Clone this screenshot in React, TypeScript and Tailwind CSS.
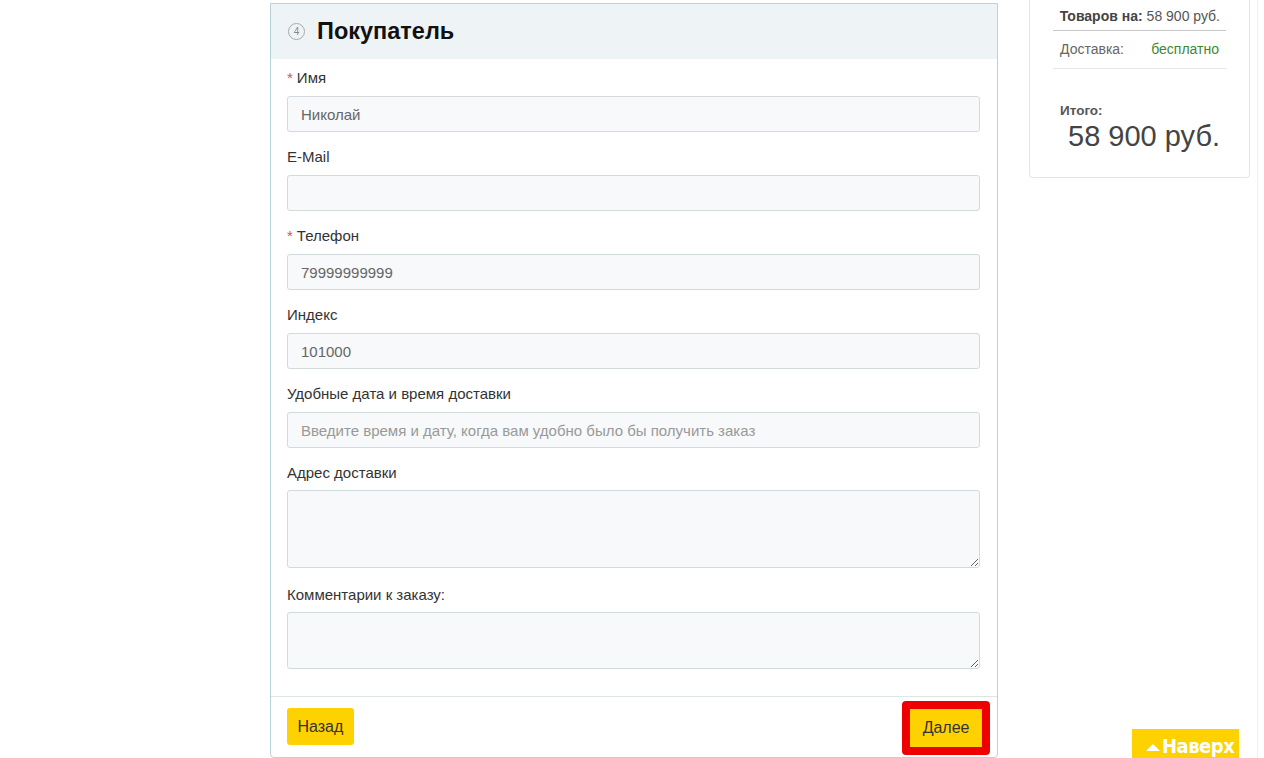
import React from "react";

const fieldCls =
  "block w-full h-[36px] rounded-[3px] border border-[#d3dadd] bg-[#f7f9fa] px-[13px] text-[15px] text-[#666] placeholder:text-[#999] outline-none";

const Label = ({ text, required }: { text: string; required?: boolean }) => (
  <div className="h-[20px] leading-[20px] text-[15px] text-[#333] mb-[8px]">
    {required && <span className="text-[#d9534f] mr-[4px]">*</span>}
    {text}
  </div>
);

const Field = ({
  label,
  required,
  value,
  placeholder,
}: {
  label: string;
  required?: boolean;
  value?: string;
  placeholder?: string;
}) => (
  <div className="mb-[15px]">
    <Label text={label} required={required} />
    <input className={fieldCls} defaultValue={value} placeholder={placeholder} />
  </div>
);

export default function App() {
  return (
    <div
      className="relative w-[1264px] h-[758px] overflow-hidden bg-white"
      style={{ fontFamily: '"Liberation Sans", Arial, sans-serif' }}
    >
      <div className="flex items-start">
        {/* main form */}
        <div className="ml-[270px] mt-[3px] w-[728px] h-[755px] border border-[#b5d3d8] rounded-b-[4px] flex flex-col">
          <div className="h-[55px] bg-[#eef3f6] flex items-center pl-[17px]">
            <span className="w-[17px] h-[17px] rounded-full border border-[#aaa] text-[#888] text-[10px] leading-none flex items-center justify-center">
              4
            </span>
            <span className="ml-[12px] text-[23.5px] font-bold text-[#111]">Покупатель</span>
          </div>
          <div className="pl-[16px] pr-[17px] pt-[9px]">
            <Field label="Имя" required value="Николай" />
            <Field label="E-Mail" />
            <Field label="Телефон" required value="79999999999" />
            <Field label="Индекс" value="101000" />
            <Field
              label="Удобные дата и время доставки"
              placeholder="Введите время и дату, когда вам удобно было бы получить заказ"
            />
            <div className="mb-[17px]">
              <div className="h-[20px] leading-[20px] text-[15px] text-[#333] mb-[7px]">Адрес доставки</div>
              <textarea className="block w-full h-[78px] rounded-[3px] border border-[#d3dadd] bg-[#f7f9fa] outline-none" />
            </div>
            <div>
              <div className="h-[20px] leading-[20px] text-[15px] text-[#333] mb-[7px]">Комментарии к заказу:</div>
              <textarea className="block w-full h-[57px] rounded-[3px] border border-[#d3dadd] bg-[#f7f9fa] outline-none" />
            </div>
          </div>
          <div className="mt-[27px] border-t border-[#dde5e8] flex items-start justify-between pl-[16px] pr-[7px] pt-[4px]">
            <button className="mt-[7px] h-[37px] px-[10.5px] rounded-[3px] bg-[#fed200] text-[16px] text-[#333]">
              Назад
            </button>
            <div className="border-[8px] border-[#ee0000] rounded-[4px]">
              <button className="h-[38px] px-[12.5px] bg-[#fed200] text-[16px] text-[#333]">Далее</button>
            </div>
          </div>
        </div>

        {/* summary card */}
        <div className="ml-[31px] w-[221px] h-[178px] border border-t-0 border-[#e3e6e8] rounded-b-[4px] px-[23px]">
          <div className="h-[31px] border-b border-[#c8c8c8] flex items-center justify-end pr-[6px] pt-[2px] text-[14px] text-[#555]">
            <span className="font-bold text-[#444] mr-[4px]">Товаров на:</span>58 900 руб.
          </div>
          <div className="h-[38px] border-b border-[#e6e6e6] flex items-center justify-between px-[7px] text-[14px]">
            <span className="text-[#666]">Доставка:</span>
            <span className="text-[#3c8a2e]">бесплатно</span>
          </div>
          <div className="pl-[7px] pt-[34px] text-[13.5px] font-bold text-[#555] leading-[16px]">Итого:</div>
          <div className="pl-[15px] text-[29px] text-[#444] leading-[34px]">58 900 руб.</div>
        </div>
      </div>

      {/* faint page edge */}
      <div className="absolute top-0 right-[6px] w-px h-full bg-[#f1f1f1]" />

      {/* scroll to top */}
      <div
        className="absolute left-[1132px] top-[729px] w-[107px] h-[29px] bg-[#fed200] flex items-end pl-[14px] text-white font-bold text-[20px] leading-[24px] tracking-[-0.5px] whitespace-nowrap"
        style={{ fontFamily: '"DejaVu Sans Condensed", "DejaVu Sans", sans-serif' }}
      >
        <span className="w-0 h-0 border-x-[7px] border-x-transparent border-b-[7px] border-b-white mr-[2px] mb-[7px]" />
        Наверх
      </div>
    </div>
  );
}
